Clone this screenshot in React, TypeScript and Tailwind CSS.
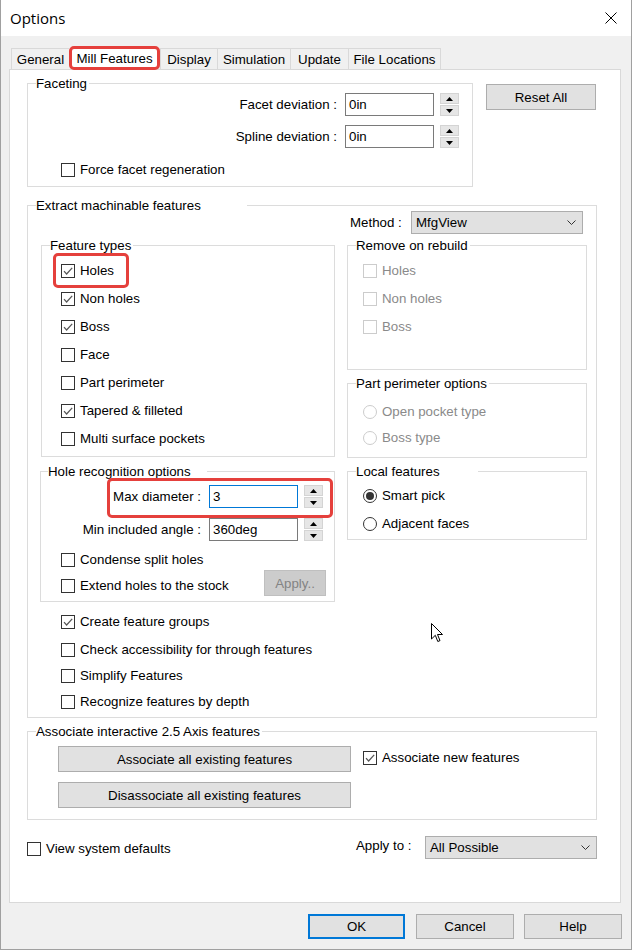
import React from "react";

type GroupBoxProps = {
  legend: string;
  className: string;
  legendClass?: string;
  children?: React.ReactNode;
};

// Classic WinForms group box: a thin frame with the caption cut into its top edge
function GroupBox({ legend, className, legendClass = "ml-[8px] w-fit pr-[2px]", children }: GroupBoxProps) {
  return (
    <div className={`relative flex shrink-0 flex-col border border-[#dcdcdc] ${className}`}>
      <div className={`-mt-[8px] h-[15px] shrink-0 whitespace-nowrap bg-white ${legendClass}`}>{legend}</div>
      {children}
    </div>
  );
}

function CheckBox({ checked = false, disabled = false }: { checked?: boolean; disabled?: boolean }) {
  return (
    <span
      className={`flex h-[14px] w-[14px] shrink-0 items-center justify-center border bg-white ${
        disabled ? "border-[#cccccc]" : "border-[#333333]"
      }`}
    >
      {checked && (
        <svg width="12" height="12" viewBox="0 0 12 12">
          <polyline points="2,6.2 4.6,9 10.2,2.8" fill="none" stroke="#555555" strokeWidth="1.2" />
        </svg>
      )}
    </span>
  );
}

function CheckRow({
  label,
  checked,
  disabled,
  className = "",
}: {
  label: string;
  checked?: boolean;
  disabled?: boolean;
  className?: string;
}) {
  return (
    <div className={`flex h-[17px] shrink-0 items-center ${className}`}>
      <CheckBox checked={checked} disabled={disabled} />
      <span className={`ml-[5px] whitespace-nowrap ${disabled ? "text-[#8a8a8a]" : ""}`}>{label}</span>
    </div>
  );
}

function RadioRow({
  label,
  selected,
  disabled,
  className = "",
}: {
  label: string;
  selected?: boolean;
  disabled?: boolean;
  className?: string;
}) {
  return (
    <div className={`flex h-[17px] shrink-0 items-center ${className}`}>
      <span
        className={`flex h-[14px] w-[14px] shrink-0 items-center justify-center rounded-full border bg-white ${
          disabled ? "border-[#cccccc]" : "border-[#333333]"
        }`}
      >
        {selected && <span className="h-[8px] w-[8px] rounded-full bg-[#333333]" />}
      </span>
      <span className={`ml-[5px] whitespace-nowrap ${disabled ? "text-[#8a8a8a]" : ""}`}>{label}</span>
    </div>
  );
}

function Spinner() {
  return (
    <div className="ml-[6px] flex h-[23px] w-[19px] shrink-0 flex-col gap-[1px]">
      <div className="flex h-[11px] items-center justify-center border border-[#d4d4d4] bg-[#e6e6e6]">
        <svg width="7" height="4" viewBox="0 0 7 4">
          <polygon points="0,4 7,4 3.5,0" fill="#000" />
        </svg>
      </div>
      <div className="flex h-[11px] items-center justify-center border border-[#d4d4d4] bg-[#e6e6e6]">
        <svg width="7" height="4" viewBox="0 0 7 4">
          <polygon points="0,0 7,0 3.5,4" fill="#000" />
        </svg>
      </div>
    </div>
  );
}

function FieldRow({
  label,
  value,
  labelWidth,
  focused,
  className = "",
}: {
  label: string;
  value: string;
  labelWidth: string;
  focused?: boolean;
  className?: string;
}) {
  return (
    <div className={`flex h-[23px] shrink-0 items-center ${className}`}>
      <span className={`whitespace-nowrap text-right ${labelWidth}`}>{label}</span>
      <div
        className={`ml-[8px] flex h-[23px] w-[89px] items-center border bg-white pl-[3px] ${
          focused ? "border-[#0078d7]" : "border-[#7a7a7a]"
        }`}
      >
        {value}
      </div>
      <Spinner />
    </div>
  );
}

function Select({ value }: { value: string }) {
  return (
    <div className="flex h-[23px] w-[172px] shrink-0 items-center justify-between border border-[#adadad] bg-[#e1e1e1] pl-[4px] pr-[6px]">
      <span>{value}</span>
      <svg width="9" height="5" viewBox="0 0 9 5">
        <polyline points="0.5,0.5 4.5,4.5 8.5,0.5" fill="none" stroke="#333333" strokeWidth="1" />
      </svg>
    </div>
  );
}

function Button({ label, className = "" }: { label: string; className?: string }) {
  return (
    <div className={`flex shrink-0 items-center justify-center border border-[#adadad] bg-[#e1e1e1] ${className}`}>
      {label}
    </div>
  );
}

function Highlight({ className }: { className: string }) {
  return <div className={`pointer-events-none absolute rounded-[5px] border-[3px] border-[#e5403c] ${className}`} />;
}

function Cursor() {
  return (
    <svg className="absolute left-[403px] top-[417px]" width="13" height="20" viewBox="0 0 13 20">
      <path d="M0.5 0.5 L0.5 16 L4.3 12.3 L6.8 18.5 L9 17.6 L6.5 11.5 L11.5 11.5 Z" fill="#fff" stroke="#000" strokeWidth="1" />
    </svg>
  );
}

const tabs = [
  { label: "General", cls: "w-[58px]" },
  { label: "Mill Features", cls: "w-[91px]", active: true },
  { label: "Display", cls: "w-[57px]" },
  { label: "Simulation", cls: "w-[73px]" },
  { label: "Update", cls: "w-[58px]" },
  { label: "File Locations", cls: "w-[93px] border-r" },
];

export default function App() {
  return (
    <div className="flex h-[950px] w-[632px] flex-col border-x border-b border-[#a0a0a0] bg-[#f0f0f0] font-['Liberation_Sans',Arial,sans-serif] text-[13.3px] leading-[15px] text-black">
      {/* Title bar */}
      <div className="flex h-[36px] shrink-0 items-center bg-white pl-[9px]">
        <span className="font-['Open_Sans',sans-serif] text-[15px]">Options</span>
        <svg className="ml-auto mr-[14px]" width="12" height="12" viewBox="0 0 12 12">
          <path d="M0.5 0.5 L11.5 11.5 M11.5 0.5 L0.5 11.5" stroke="#000" strokeWidth="1" />
        </svg>
      </div>

      {/* Tab strip */}
      <div className="mt-[10px] flex h-[23px] shrink-0 items-end pl-[10px]">
        {tabs.map((t) =>
          t.active ? (
            <div
              key={t.label}
              className={`relative z-10 -mb-[1px] flex h-[24px] items-center justify-center rounded-[5px] border-[3px] border-[#e5403c] bg-white ${t.cls}`}
            >
              {t.label}
            </div>
          ) : (
            <div
              key={t.label}
              className={`flex h-[21px] items-center justify-center border-l border-t border-[#d9d9d9] bg-[#f0f0f0] ${t.cls}`}
            >
              {t.label}
            </div>
          )
        )}
      </div>

      {/* Tab page */}
      <div className="ml-[8px] flex h-[834px] w-[612px] shrink-0 flex-col border border-[#d9d9d9] bg-white pl-[17px]">
        <div className="mt-[13px] flex items-start">
          <GroupBox legend="Faceting" className="h-[104px] w-[446px]">
            <FieldRow className="mt-[2px]" label="Facet deviation :" value="0in" labelWidth="w-[309px]" />
            <FieldRow className="mt-[9px]" label="Spline deviation :" value="0in" labelWidth="w-[309px]" />
            <CheckRow className="ml-[33px] mt-[13px]" label="Force facet regeneration" />
          </GroupBox>
          <Button label="Reset All" className="ml-[13px] mt-[1px] h-[26px] w-[110px]" />
        </div>

        <GroupBox
          legend="Extract machinable features"
          className="mt-[18px] h-[513px] w-[570px]"
          legendClass="ml-[8px] w-[211px]"
        >
          <div className="-mt-[2px] ml-[322px] flex h-[23px] items-center">
            <span className="w-[61px]">Method :</span>
            <Select value="MfgView" />
          </div>

          <div className="mt-[11px] flex">
            <div className="ml-[13px] flex w-[294px] flex-col">
              <GroupBox legend="Feature types" className="h-[212px] w-[294px]">
                <Highlight className="left-[11px] top-[7px] h-[35px] w-[76px]" />
                <CheckRow className="ml-[19px] mt-[9px]" label="Holes" checked />
                <CheckRow className="ml-[19px] mt-[11px]" label="Non holes" checked />
                <CheckRow className="ml-[19px] mt-[11px]" label="Boss" checked />
                <CheckRow className="ml-[19px] mt-[11px]" label="Face" />
                <CheckRow className="ml-[19px] mt-[11px]" label="Part perimeter" />
                <CheckRow className="ml-[19px] mt-[11px]" label="Tapered & filleted" checked />
                <CheckRow className="ml-[19px] mt-[11px]" label="Multi surface pockets" />
              </GroupBox>

              <GroupBox
                legend="Hole recognition options"
                className="-ml-[1px] mt-[14px] h-[131px] w-[295px]"
                legendClass="ml-[7px] w-[159px]"
              >
                <Highlight className="left-[66px] top-[6px] h-[40px] w-[226px]" />
                <FieldRow className="mt-[6px]" label="Max diameter :" value="3" labelWidth="w-[160px]" focused />
                <FieldRow className="mt-[10px]" label="Min included angle :" value="360deg" labelWidth="w-[160px]" />
                <CheckRow className="ml-[20px] mt-[10px]" label="Condense split holes" />
                <div className="mt-[2px] flex items-start">
                  <CheckRow className="ml-[20px] mt-[7px]" label="Extend holes to the stock" />
                  <div className="ml-auto mr-[8px] flex h-[26px] w-[62px] items-center justify-center border border-[#bfbfbf] bg-[#cccccc] text-[#838383]">
                    Apply..
                  </div>
                </div>
              </GroupBox>
            </div>

            <div className="ml-[12px] flex w-[240px] flex-col">
              <GroupBox legend="Remove on rebuild" className="h-[125px] w-[240px]">
                <CheckRow className="ml-[15px] mt-[9px]" label="Holes" disabled />
                <CheckRow className="ml-[15px] mt-[11px]" label="Non holes" disabled />
                <CheckRow className="ml-[15px] mt-[11px]" label="Boss" disabled />
              </GroupBox>
              <GroupBox legend="Part perimeter options" className="mt-[13px] h-[75px] w-[240px]">
                <RadioRow className="ml-[15px] mt-[12px]" label="Open pocket type" disabled />
                <RadioRow className="ml-[15px] mt-[9px]" label="Boss type" disabled />
              </GroupBox>
              <GroupBox
                legend="Local features"
                className="mt-[13px] h-[69px] w-[240px]"
                legendClass="ml-[8px] w-[122px]"
              >
                <RadioRow className="ml-[15px] mt-[8px]" label="Smart pick" selected />
                <RadioRow className="ml-[15px] mt-[11px]" label="Adjacent faces" />
              </GroupBox>
            </div>
          </div>

          <CheckRow className="ml-[33px] mt-[11px]" label="Create feature groups" checked />
          <CheckRow className="ml-[33px] mt-[11px]" label="Check accessibility for through features" />
          <CheckRow className="ml-[33px] mt-[9px]" label="Simplify Features" />
          <CheckRow className="ml-[33px] mt-[9px]" label="Recognize features by depth" />

          <Cursor />
        </GroupBox>

        <GroupBox legend="Associate interactive 2.5 Axis features" className="mt-[13px] h-[89px] w-[570px]">
          <div className="mt-[7px] flex items-start">
            <div className="ml-[30px] flex w-[293px] flex-col gap-[10px]">
              <Button label="Associate all existing features" className="h-[26px] w-[293px]" />
              <Button label="Disassociate all existing features" className="h-[26px] w-[293px]" />
            </div>
            <CheckRow className="ml-[12px] mt-[3px]" label="Associate new features" checked />
          </div>
        </GroupBox>

        <div className="mt-[16px] flex items-start">
          <div className="w-[329px]">
            <CheckRow className="mt-[4px]" label="View system defaults" />
          </div>
          <span className="mt-[2px] w-[69px]">Apply to :</span>
          <Select value="All Possible" />
        </div>
      </div>

      {/* Dialog buttons */}
      <div className="mt-[11px] flex shrink-0 justify-end pr-[9px]">
        <div className="flex h-[25px] w-[97px] items-center justify-center border-2 border-[#0078d7] bg-[#e1e1e1]">OK</div>
        <Button label="Cancel" className="ml-[11px] h-[25px] w-[98px]" />
        <Button label="Help" className="ml-[10px] h-[25px] w-[98px]" />
      </div>
    </div>
  );
}
